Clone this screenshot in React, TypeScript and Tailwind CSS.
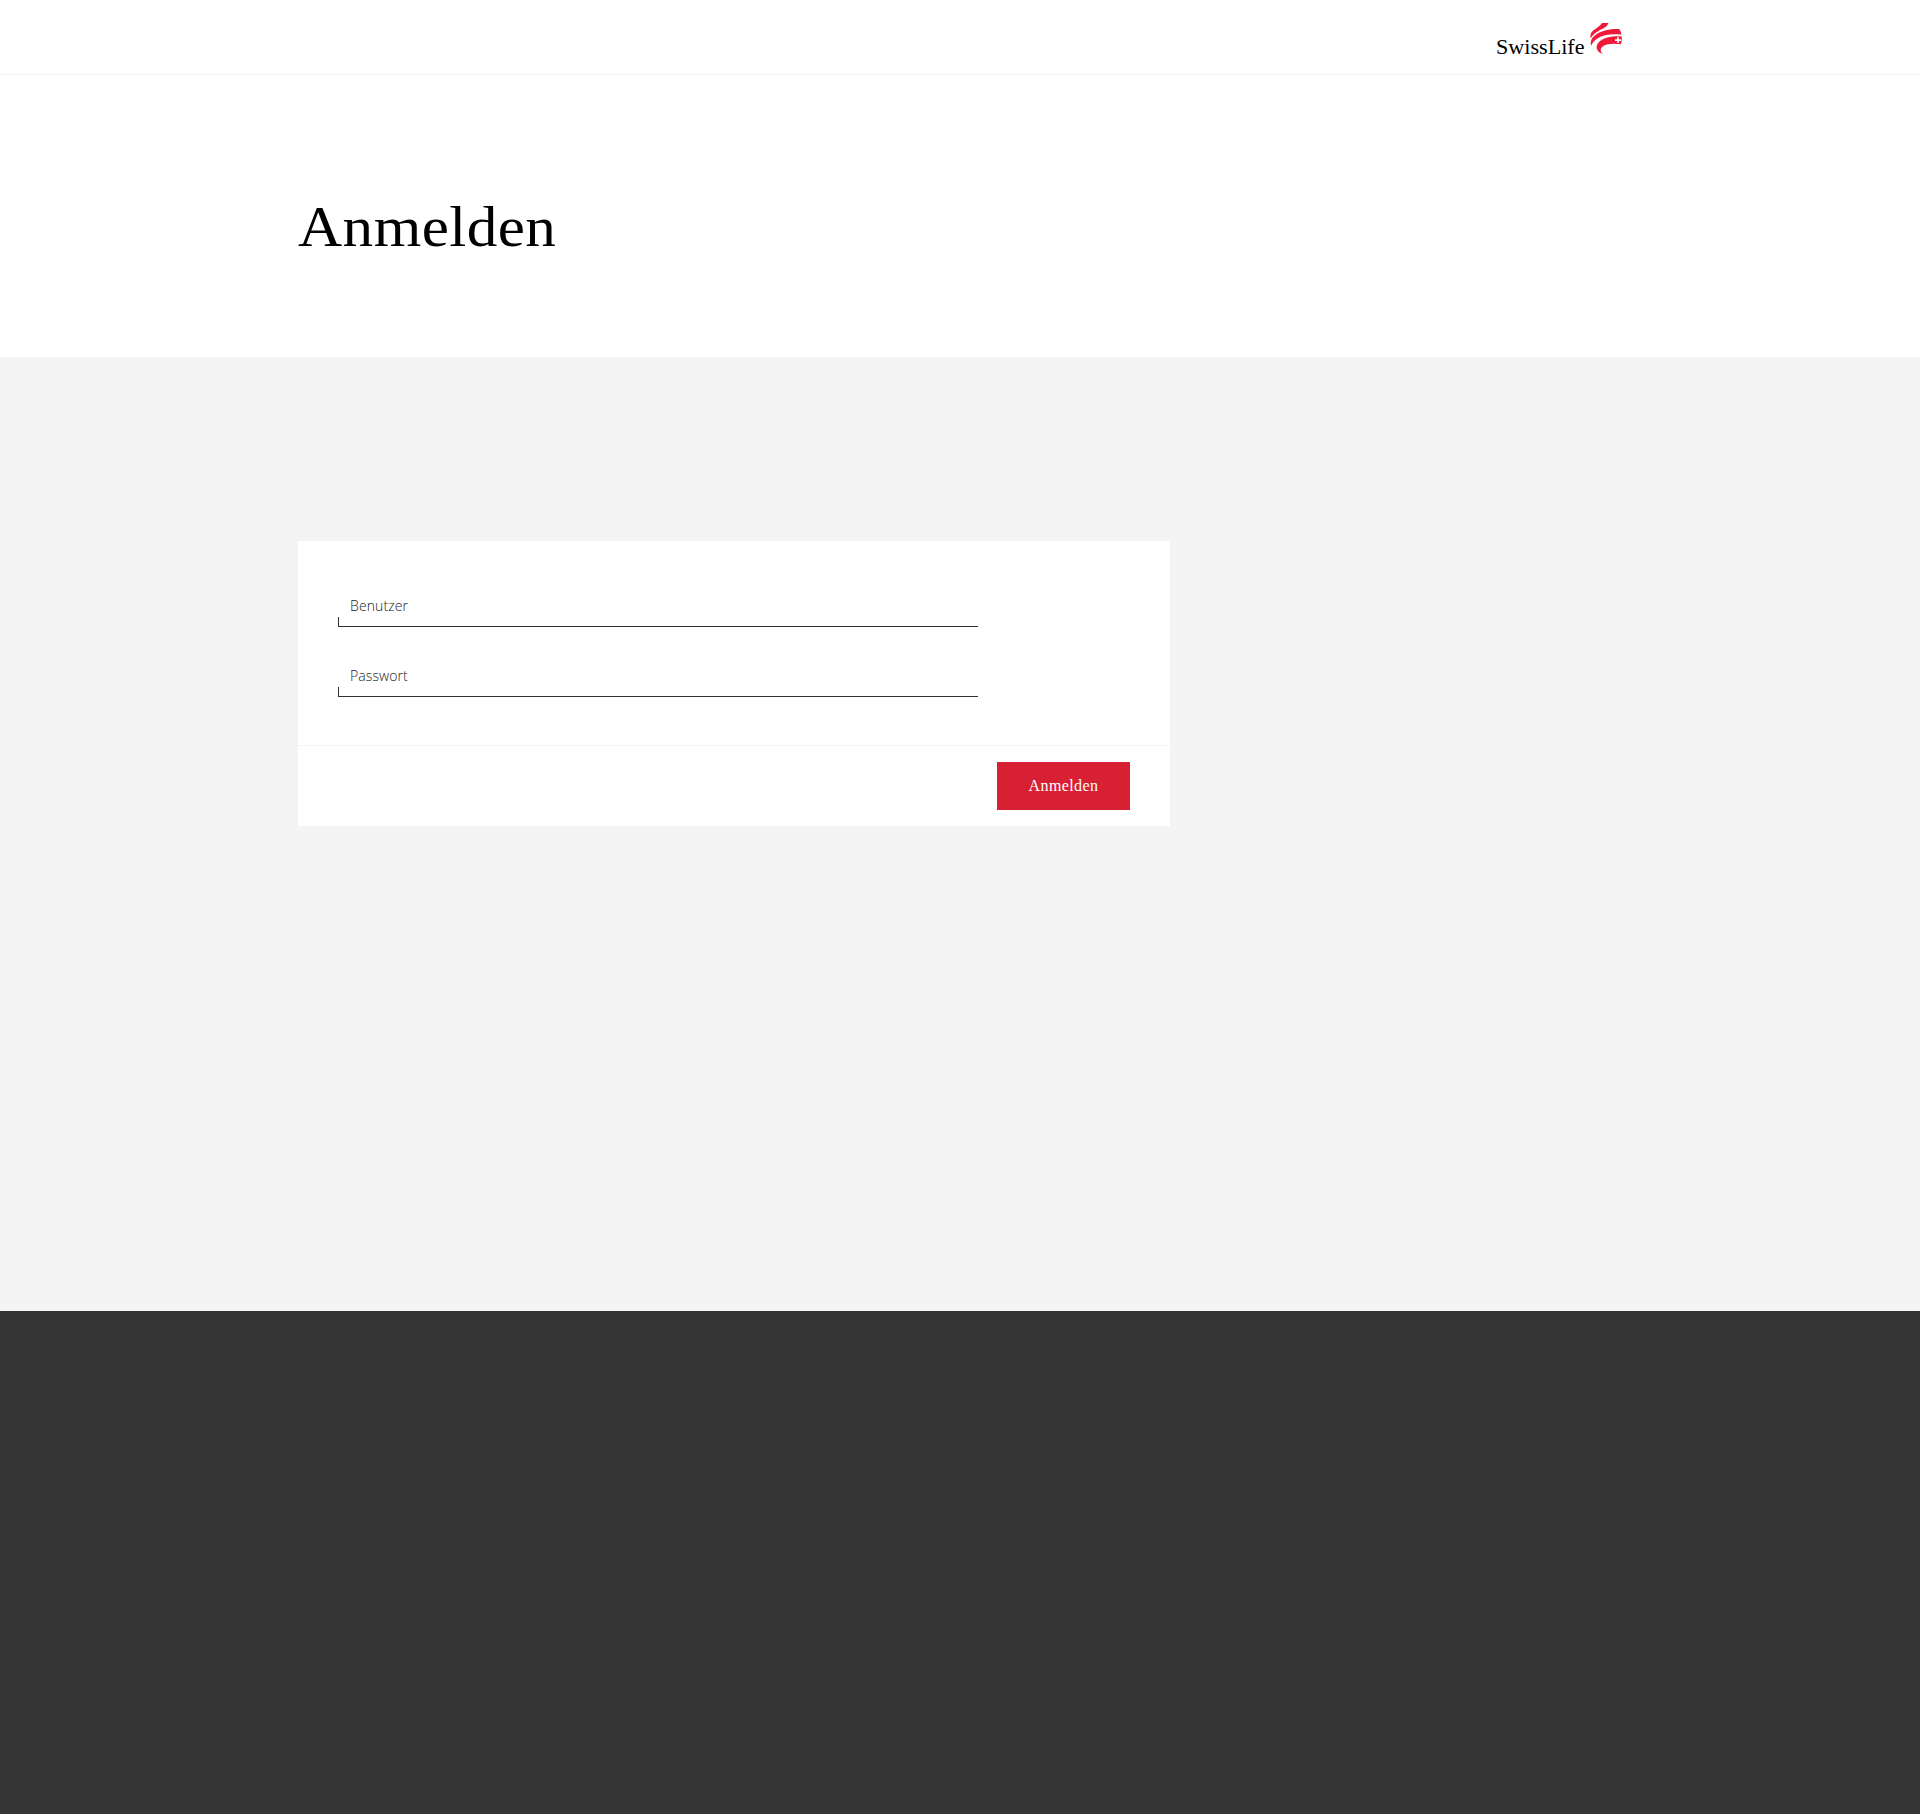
import React from "react";

function Logo() {
  return (
    <svg className="overflow-visible" width="128" height="36" viewBox="0 0 128 36" role="img" aria-label="SwissLife">
      <text x="-1" y="32.5" textLength="88.5" lengthAdjust="spacingAndGlyphs" fill="#000" fontSize="22" style={{ fontFamily: '"Liberation Serif", serif' }}>
        SwissLife
      </text>
      <g fill="#f01939" transform="translate(-0.5 0.3)">
        <path d="M94.2 17.200C93.400 13.600 94.200 11.400 97 9C100.500 6.200 103.600 4.400 105.600 1.600H112C110.800 4.400 109.600 5.600 107 7C101.600 9.800 96.800 12.400 94.200 17.200Z" />
        <path d="M94.800 24.400C93.600 21 94.400 17.400 97.800 14.600C103.600 9.400 113.600 7.200 122.600 7.800C124 9.200 124.600 11.200 124.900 13.400C115.400 12.400 106.400 13.400 100.200 17.600C97.200 19.600 95.600 21.800 94.800 24.400Z" />
        <path d="M106.800 32.800C101 31.400 98.400 26.400 101.400 22C105 16.800 115.400 14.200 125.200 15.200C125.500 17.600 125.300 20.400 124.300 23C116.600 21.600 108.800 22.400 105.600 25.600C103.200 28 104.200 30.800 106.800 32.800Z" />
        <path d="M120.700 15.800h1.600v2.200h2.200v1.600h-2.200v2.200h-1.600v-2.200h-2.200v-1.600h2.200z" fill="#fff" />
      </g>
    </svg>
  );
}

function Field({ label, type }: { label: string; type: string }) {
  return (
    <label className="relative block h-[38px] w-[640px]">
      <span className="block pt-[7px] pl-3 font-['Open_Sans',sans-serif] text-[14px] leading-5 font-light tracking-[0.1px] text-[#222]">
        {label}
      </span>
      <input type={type} className="absolute inset-0 h-full w-full border-b border-[#333] bg-transparent outline-none" />
      <span className="absolute bottom-0 left-0 h-[10px] w-px bg-[#333]" />
    </label>
  );
}

export default function App() {
  return (
    <div className="flex h-[1814px] w-full flex-col bg-white">
      <header className="h-[75px] border-b border-[#f4f4f4]">
        <div className="mx-auto flex w-[1324px] justify-end pt-[21px]">
          <div className="-mr-[3px]">
            <Logo />
          </div>
        </div>
      </header>
      <section className="h-[282px]">
        <div className="mx-auto w-[1324px] pt-[117px]">
          <h1 className="origin-left scale-x-[1.055] font-['Liberation_Serif',serif] text-[58px] leading-[70px] tracking-[0.4px] text-black">
            Anmelden
          </h1>
        </div>
      </section>
      <main className="h-[954px] bg-[#f4f4f4] pt-[184px]">
        <div className="mx-auto w-[1324px]">
          <form className="w-[872px] bg-white" onSubmit={(e) => e.preventDefault()}>
            <div className="flex h-[204px] flex-col gap-8 pt-12 pl-10">
              <Field label="Benutzer" type="text" />
              <Field label="Passwort" type="password" />
            </div>
            <div className="flex h-[81px] items-center justify-end border-t border-[#f4f4f4] pr-10">
              <button className="h-12 w-[133px] bg-[#d82034] font-['Liberation_Serif',serif] text-[16px] tracking-[0.4px] text-white">
                Anmelden
              </button>
            </div>
          </form>
        </div>
      </main>
      <footer className="flex-1 bg-[#353535]" />
    </div>
  );
}
